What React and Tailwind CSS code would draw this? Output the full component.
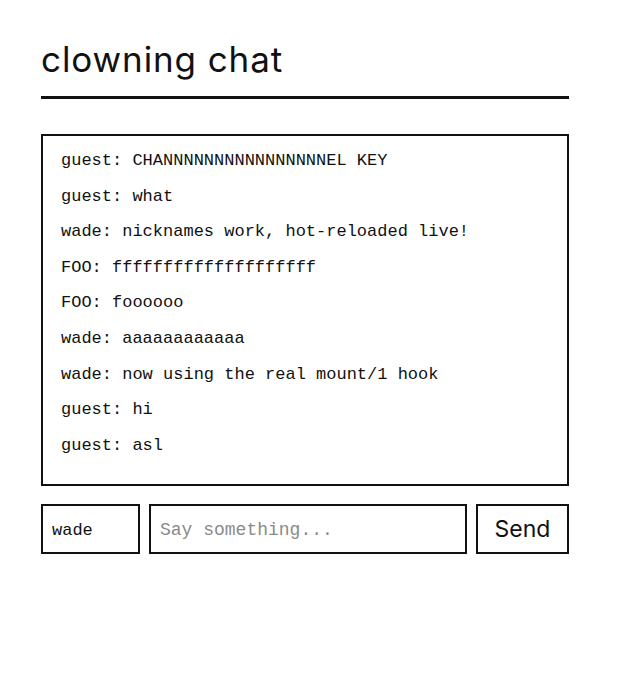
import { useState } from "react";

const messages = [
  { nick: "guest", body: "CHANNNNNNNNNNNNNNNNEL KEY" },
  { nick: "guest", body: "what" },
  { nick: "wade", body: "nicknames work, hot-reloaded live!" },
  { nick: "FOO", body: "ffffffffffffffffffff" },
  { nick: "FOO", body: "foooooo" },
  { nick: "wade", body: "aaaaaaaaaaaa" },
  { nick: "wade", body: "now using the real mount/1 hook" },
  { nick: "guest", body: "hi" },
  { nick: "guest", body: "asl" },
];

export default function App() {
  const [nick, setNick] = useState("wade");
  const [text, setText] = useState("");

  return (
    <div className="min-h-screen bg-white text-[#111] font-['Inter',sans-serif]">
      <div className="w-[528px] ml-[41px] pt-[35px]">
        {/* header */}
        <h1 className="text-[35px] leading-[48px] tracking-[0.9px] pb-[13px] border-b-[3px] border-[#111]">
          clowning chat
        </h1>

        {/* message log */}
        <div className="mt-[35px] h-[352px] border-2 border-[#111] px-[18px] pt-[7px] overflow-y-auto font-['Liberation_Mono',monospace] text-[17px]">
          {messages.map((m, i) => (
            <p key={i} className="leading-[35.6px] whitespace-pre">
              {m.nick}: {m.body}
            </p>
          ))}
        </div>

        {/* input row */}
        <form className="mt-[18px] flex gap-[9px] h-[50px]" onSubmit={(e) => e.preventDefault()}>
          <input
            value={nick}
            onChange={(e) => setNick(e.target.value)}
            className="w-[99px] border-2 border-[#111] px-[9px] pt-[3px] font-['Liberation_Mono',monospace] text-[17px] outline-none"
          />
          <input
            value={text}
            onChange={(e) => setText(e.target.value)}
            placeholder="Say something..."
            className="flex-1 border-2 border-[#111] px-[9px] pt-[3px] font-['Liberation_Mono',monospace] text-[18px] placeholder:text-[#8a8a8a] outline-none"
          />
          <button type="submit" className="w-[93px] border-2 border-[#111] pt-[1px] text-[23px] bg-white">
            Send
          </button>
        </form>
      </div>
    </div>
  );
}
